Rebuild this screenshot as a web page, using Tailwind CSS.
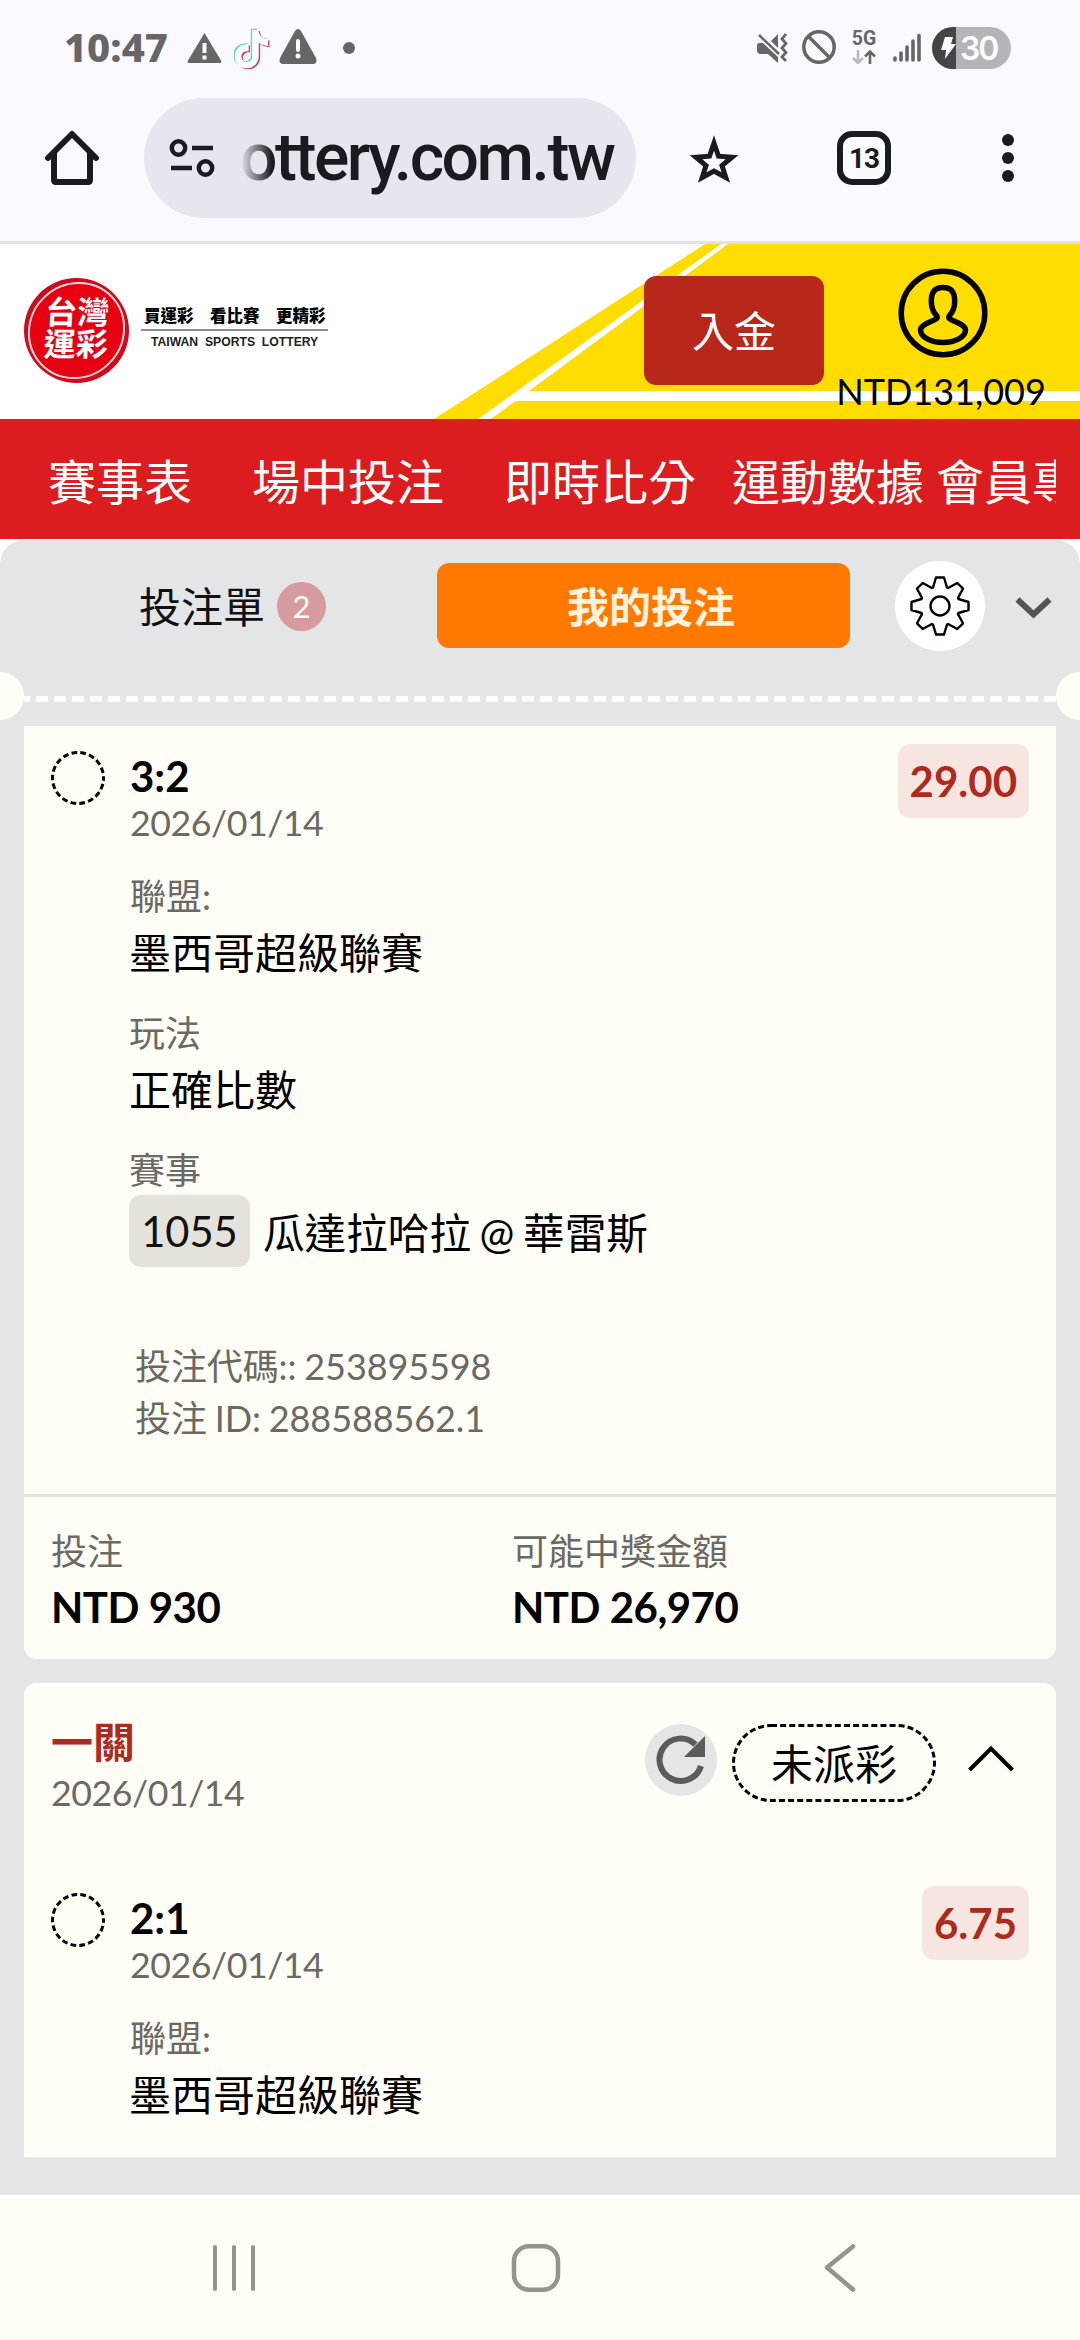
<!DOCTYPE html>
<html lang="zh-Hant">
<head>
<meta charset="utf-8">
<title>台灣運彩</title>
<script src="https://cdn.jsdelivr.net/npm/@tailwindcss/browser@4"></script>
</head>
<body class="w-[1080px] h-[2340px] overflow-hidden flex flex-col bg-[#fffef6] text-black font-['Lato','Noto_Sans_CJK_TC',sans-serif]">

<!-- Status bar -->
<div class="h-[96px] shrink-0 bg-[#faf9ff] flex items-start text-[#666668]">
  <div class="ml-[64px] mt-[20px] w-[105px] leading-[54px] text-[40px] font-extrabold font-['Noto_Sans',sans-serif] whitespace-nowrap">10:47</div>
  <svg class="ml-[18px] mt-[33px]" width="35" height="30" viewBox="0 0 35 30"><path d="M17.500 0 L34 27.500 Q35 30 33 30 H2 Q0 30 1 27.500Z" fill="#666668"/><path d="M15.500 10h4v10h-4z M15.500 22.500h4v4h-4z" fill="#fff"/></svg>
  <svg class="ml-[12px] mt-[28px]" width="36" height="41" viewBox="0 0 36 41">
    <defs><path id="note" d="M12.525.02c1.31-.02 2.61-.01 3.91-.02.08 1.53.63 3.09 1.75 4.17 1.12 1.11 2.7 1.62 4.24 1.79v4.03c-1.440-.05-2.890-.35-4.200-.97-.57-.26-1.100-.59-1.620-.93-.01 2.920.01 5.840-.02 8.750-.08 1.400-.54 2.790-1.350 3.940-1.310 1.920-3.580 3.170-5.910 3.210-1.430.08-2.860-.31-4.080-1.030-2.020-1.190-3.440-3.370-3.650-5.710-.02-.5-.03-1-.01-1.490.18-1.900 1.120-3.720 2.580-4.960 1.660-1.440 3.980-2.130 6.150-1.720.02 1.480-.04 2.960-.04 4.440-.99-.32-2.150-.23-3.020.37-.63.41-1.110 1.040-1.360 1.750-.21.51-.15 1.070-.14 1.610.24 1.640 1.820 3.020 3.500 2.870 1.120-.01 2.190-.66 2.770-1.610.19-.33.4-.67.41-1.060.1-1.790.06-3.570.07-5.360.01-4.030-.01-8.050.02-12.070z"/></defs>
    <use href="#note" fill="#4fe0dc" transform="translate(-3.200 .8) scale(1.6)"/>
    <use href="#note" fill="#d93a5c" transform="translate(-.4 3) scale(1.6)"/>
    <use href="#note" fill="#fff" transform="translate(-1.800 1.900) scale(1.6)"/>
  </svg>
  <svg class="ml-[9px] mt-[29px]" width="38" height="35" viewBox="0 0 38 35"><path d="M16 2 Q19 -2 22 2 L37 29 Q39 35 33 35 H5 Q-1 35 1 29Z" fill="#666668"/><path d="M19 12v9" stroke="#fff" stroke-width="4" stroke-linecap="round"/><circle cx="19" cy="27" r="2.500" fill="#fff"/></svg>
  <div class="ml-[26px] mt-[42px] size-[12px] rounded-full bg-[#666668]"></div>

  <svg class="ml-[402px] mt-[33px]" width="31" height="30" viewBox="0 0 31 30"><path d="M2 10h4l15 14v6L11 21H4Q0 21 0 17V13Q0 10 2 10Z M21 1v14L14 8Z" fill="#666668"/><path d="M2 2 22 21" stroke="#666668" stroke-width="2.500"/><path d="M29 1l-4 5 4 4.500-4 4.500 4 4.500-4 4.500 4 4" fill="none" stroke="#666668" stroke-width="2.800"/></svg>
  <svg class="ml-[14px] mt-[30px]" width="34" height="34" viewBox="0 0 34 34" fill="none" stroke="#666668" stroke-width="3.500"><circle cx="17" cy="17" r="15.200"/><path d="M6 6 28 28"/></svg>
  <div class="ml-[13px] mt-[29px] w-[30px] flex flex-col items-center">
    <div class="text-[19.500px] leading-[20px] font-bold font-['Roboto',sans-serif]">5G</div>
    <svg class="mt-[1px]" width="24" height="14" viewBox="0 0 24 14" fill="none" stroke-width="2.600"><path d="M6 0v12.500M1 8l5 5 5-5" stroke="#b9b9be"/><path d="M18 14V1.500M13 6.500l5-5 5 5" stroke="#666668"/></svg>
  </div>
  <svg class="ml-[14px] mt-[33px]" width="28" height="30" viewBox="0 0 28 30" stroke="#666668" stroke-width="3.600" stroke-linecap="round"><path d="M2 25v2M8 20v7M14 14v13M20 8v19M26 2.500v24.500"/></svg>
  <div class="ml-[11px] mt-[27px] w-[79px] h-[42px] rounded-full overflow-hidden flex bg-[#b4b4b8]">
    <div class="w-[24px] bg-[#454547] flex items-center justify-end"><svg width="16" height="24" viewBox="0 0 16 24"><path d="M5 1h8l-2 7h5L5 23l1-9H1Z" fill="#fff"/></svg></div>
    <div class="ml-[4px] text-[32px] leading-[43px] text-white font-semibold font-['Inter',sans-serif] tracking-[-2px]">30</div>
  </div>
</div>

<!-- Browser toolbar -->
<div class="h-[148px] shrink-0 bg-[#faf9ff] border-b-[3px] border-[#e1e1e8] flex items-start text-[#1a1b20]">
  <svg class="ml-[44px] mt-[34px]" width="56" height="56" viewBox="0 0 56 56" fill="none" stroke="#1a1b20" stroke-width="6" stroke-linejoin="round" stroke-linecap="round"><path d="M4 28 28 4 52 28"/><path d="M10 24V50Q10 52 12 52H44Q46 52 46 50V24"/></svg>
  <div class="ml-[44px] mt-[2px] w-[492px] h-[120px] rounded-full bg-[#e7e6ee] flex">
    <svg class="ml-[25px] mt-[40px]" width="46" height="40" viewBox="0 0 46 40" fill="none" stroke="#1a1b20" stroke-width="4.500"><circle cx="9.500" cy="10" r="6.700"/><path d="M23 10h21M2 30h21"/><circle cx="36.500" cy="30" r="6.700"/></svg>
    <div class="ml-[25px] mt-[18px] w-[380px] leading-[84px] text-[66px] font-medium font-['Roboto',sans-serif] tracking-[-2.5px] whitespace-nowrap bg-linear-to-r from-transparent to-[#1a1b20] to-[32px] bg-clip-text text-transparent">ottery.com.tw</div>
  </div>
  <svg class="ml-[50px] mt-[37px]" width="56" height="53" viewBox="0 0 56 53" fill="none" stroke="#1a1b20" stroke-width="5"><path d="M28 10 32.500 23.200 46 24.200 36 32.500 39.800 44.500 28 38 16.200 44.500 20 32.500 10 24.200 23.500 23.200Z"/></svg>
  <div class="ml-[95px] mt-[35px] w-[54px] h-[54px] border-[6px] border-[#1a1b20] rounded-[15px] flex items-center justify-center text-[28px] leading-none font-bold font-['Roboto',sans-serif] tracking-[-1px]"><span class="pt-[2px]">13</span></div>
  <div class="ml-[111px] mt-[38px] flex flex-col gap-[6px]">
    <div class="size-[12px] rounded-full bg-[#1a1b20]"></div><div class="size-[12px] rounded-full bg-[#1a1b20]"></div><div class="size-[12px] rounded-full bg-[#1a1b20]"></div>
  </div>
</div>

<!-- Site header -->
<header class="relative h-[175px] shrink-0 bg-white flex items-start">
  <svg class="absolute inset-0" width="1080" height="175" viewBox="0 0 1080 175"><path d="M434 175 705 0H1080V175Z" fill="#ffdd00"/><path d="M478 175 721 0h7L491 175Z" fill="#fff"/><path d="M526 147H1080v10H510Z" fill="#fff"/></svg>
  <div class="relative ml-[24px] mt-[34px] size-[105px] rounded-full bg-[#cf0a1c] p-[4px]">
    <div class="size-full rounded-full border-2 border-[#ffd9d9] bg-[#e60012] flex flex-col items-center justify-center pb-[6px] text-white font-bold text-[32px] leading-[32px] -skew-x-3"><span>台灣</span><span>運彩</span></div>
  </div>
  <div class="relative ml-[12px] mt-[62px] w-[187px] flex flex-col">
    <div class="pl-[3px] h-[25px] border-b-2 border-[#8f8f8f] flex gap-[16.500px] text-[16.500px] leading-[20px] font-black whitespace-nowrap"><span>買運彩</span><span>看比賽</span><span>更精彩</span></div>
    <div class="mt-[3px] pl-[10px] text-[12.200px] leading-[16px] font-['Liberation_Sans',sans-serif] font-bold text-[#222] whitespace-pre">TAIWAN  SPORTS  LOTTERY</div>
  </div>
  <div class="relative ml-[316px] mt-[32px] w-[180px] h-[109px] rounded-xl bg-[#b7281b] text-white text-[42px] flex items-center justify-center pt-[1px]">入金</div>
  <div class="relative ml-[11px] mt-[24px] w-[212px] flex flex-col items-center">
    <svg class="ml-[3px]" width="90" height="90" viewBox="0 0 90 90" fill="none" stroke="#000" stroke-width="5.500"><circle cx="45" cy="45" r="41.800"/><path d="M45 19.500C36 19.500 33.300 25 33.300 33 33.300 41 36 45 38.500 47.500 40.500 50.500 37.500 51.500 34 53 28 55.500 22.500 58 22.500 62 22.500 69 33 74.500 45 74.500S67.500 69 67.500 62C67.500 58 62 55.500 56 53 52.500 51.500 49.500 50.500 51.500 47.500 54 45 56.700 41 56.700 33 56.700 25 54 19.500 45 19.500Z"/></svg>
    <div class="mt-[11px] text-[36px] leading-[44px]">NTD131,009</div>
  </div>
</header>

<!-- Site navigation -->
<nav class="h-[120px] shrink-0 bg-[#dc1d1f] px-[24px]">
  <div class="h-full overflow-hidden flex items-center pl-[24px] pt-[5px] text-[48px] leading-[60px] text-white whitespace-nowrap">
    <span class="w-[204px] shrink-0">賽事表</span><span class="w-[252px] shrink-0">場中投注</span><span class="w-[228px] shrink-0">即時比分</span><span class="w-[204px] shrink-0">運動數據</span><span class="shrink-0">會員專區</span>
  </div>
</nav>

<!-- Bet slip panel -->
<main class="h-[1655px] shrink-0 mt-px bg-[#e4e5e7] rounded-t-3xl overflow-hidden flex flex-col">
  <div class="h-[132px] shrink-0 flex items-start">
    <div class="ml-[139px] mt-[35px] w-[125px] leading-[64px] text-[42px] text-[#111] whitespace-nowrap">投注單</div>
    <div class="ml-[13px] mt-[42px] size-[49px] rounded-full bg-[#d79a9e] text-white text-[31px] leading-[49px] text-center">2</div>
    <div class="ml-[111px] mt-[23px] w-[413px] h-[85px] rounded-xl bg-[#ff7900] text-[#fff3e0] text-[42px] leading-[88px] font-bold text-center pl-[15px]">我的投注</div>
    <svg class="ml-[45px] mt-[21px]" width="90" height="90" viewBox="-45 -45 90 90"><circle r="45" fill="#fff"/><path d="M-7-18.500-4-28.500H4L7-18.500 8.100-18 17.300-23 23-17.300 18-8.100 18.500-7 28.500-4V4L18.500 7 18 8.100 23 17.300 17.300 23 8.100 18 7 18.500 4 28.500H-4L-7 18.500-8.100 18-17.300 23-23 17.300-18 8.100-18.500 7-28.500 4V-4L-18.500-7-18-8.100-23-17.300-17.300-23-8.100-18Z" fill="none" stroke="#000" stroke-width="2.400" stroke-linejoin="round"/><circle r="9.500" fill="none" stroke="#000" stroke-width="2.400"/></svg>
    <svg class="ml-[30px] mt-[57px]" width="37" height="22" viewBox="0 0 37 22" fill="none" stroke="#555557" stroke-width="6"><path d="M2.500 2.500 18.500 17.500 34.500 2.500"/></svg>
  </div>

  <!-- Perforation -->
  <div class="h-[48px] shrink-0 flex items-center justify-between">
    <div class="w-[24px] h-[48px] rounded-r-full bg-[#fffef6]"></div>
    <div class="grow h-[6px] mt-[6px] bg-[repeating-linear-gradient(90deg,#fffef6_0_6px,transparent_6px_12px,#fffef6_12px_18px)]"></div>
    <div class="w-[24px] h-[48px] rounded-l-full bg-[#fffef6]"></div>
  </div>

  <div class="px-[24px] mt-[6px] flex flex-col gap-[24px]">
    <!-- First ticket -->
    <section class="bg-[#fffef6] rounded-b-xl h-[933px] flex flex-col">
      <div class="flex items-start pl-[27px] pr-[27px] h-[768px]">
        <svg class="mt-[25px] shrink-0" width="54" height="54" viewBox="0 0 54 54"><circle cx="27" cy="27" r="25.500" fill="none" stroke="#000" stroke-width="3" stroke-dasharray="5.720 3.180" stroke-dashoffset="2.860"/></svg>
        <div class="ml-[25px] pt-[25px] grow flex flex-col">
          <div class="text-[42px] leading-[50px] font-bold">3:2</div>
          <div class="text-[35.700px] leading-[44px] text-[#6b6963] tracking-[-0.45px]">2026/01/14</div>
          <div class="text-[36px] leading-[44px] mt-[29px] text-[#6b6963]">聯盟:</div>
          <div class="text-[42px] leading-[50px] mt-[10px] -ml-px">墨西哥超級聯賽</div>
          <div class="text-[36px] leading-[44px] mt-[33px] -ml-px text-[#6b6963]">玩法</div>
          <div class="text-[42px] leading-[50px] mt-[10px] -ml-px">正確比數</div>
          <div class="text-[36px] leading-[44px] mt-[33px] -ml-px text-[#6b6963]">賽事</div>
          <div class="mt-[3px] flex text-[41.600px] leading-[73px]">
            <span class="-ml-px w-[121px] h-[72px] rounded-xl bg-[#e5e2dc] text-center text-[#111]">1055</span>
            <span class="ml-[13px] pt-[2px] [word-spacing:-2px]">瓜達拉哈拉 @ 華雷斯</span>
          </div>
          <div class="mt-[70px] ml-[5px] text-[36px] leading-[52px] text-[#6b6963] tracking-[-0.1px] [word-spacing:-1.2px]">投注代碼:: 253895598<br>投注 ID: 288588562.1</div>
        </div>
        <div class="mt-[18px] h-[74px] px-[12px] rounded-xl bg-[#f7e6df] text-[#ad2a20] text-[42px] leading-[74px] font-bold">29.00</div>
      </div>
      <div class="grow border-t-[3px] border-[#e5e2dc] pl-[27px] pt-[32px] flex">
        <div class="w-[461px]">
          <div class="text-[36px] leading-[44px] text-[#6b6963]">投注</div>
          <div class="mt-[9px] text-[42px] leading-[50px] font-bold tracking-[-0.5px]">NTD 930</div>
        </div>
        <div>
          <div class="text-[36px] leading-[44px] text-[#6b6963]">可能中獎金額</div>
          <div class="mt-[9px] text-[42px] leading-[50px] font-bold tracking-[-0.5px]">NTD 26,970</div>
        </div>
      </div>
    </section>

    <!-- Second ticket -->
    <section class="bg-[#fffef6] rounded-t-xl h-[474px] flex flex-col px-[27px]">
      <div class="h-[185px] shrink-0 flex items-start">
        <div class="pt-[33px] grow">
          <div class="text-[42px] leading-[52px] font-bold text-[#ad2a20]">一關</div>
          <div class="text-[35.700px] leading-[44px] mt-[3px] text-[#6b6963] tracking-[-0.45px]">2026/01/14</div>
        </div>
        <svg class="mt-[41px]" width="72" height="72" viewBox="0 0 72 72"><circle cx="36" cy="36" r="36" fill="#e4e5e7"/><path d="M50.500 20.500A21.200 21.200 0 1 0 56 42" fill="none" stroke="#5b5b5b" stroke-width="6"/><path d="M60 12V33H39Z" fill="#5b5b5b"/></svg>
        <div class="relative ml-[15px] mt-[41px] w-[204px] h-[78px] text-center text-[42px] leading-[80px]">
          <svg class="absolute inset-0" width="204" height="78" viewBox="0 0 204 78"><rect x="1.500" y="1.500" width="201" height="75" rx="37.500" fill="none" stroke="#000" stroke-width="3" stroke-dasharray="6 3.120"/></svg>
          未派彩
        </div>
        <svg class="ml-[31px] mr-[14px] mt-[62px]" width="48" height="28" viewBox="0 0 48 28" fill="none" stroke="#000" stroke-width="4"><path d="M2.500 25 24 3.500 45.500 25"/></svg>
      </div>
      <div class="flex items-start">
        <svg class="mt-[25px] shrink-0" width="54" height="54" viewBox="0 0 54 54"><circle cx="27" cy="27" r="25.500" fill="none" stroke="#000" stroke-width="3" stroke-dasharray="5.720 3.180" stroke-dashoffset="2.860"/></svg>
        <div class="ml-[25px] pt-[25px] grow flex flex-col">
          <div class="text-[42px] leading-[50px] font-bold">2:1</div>
          <div class="text-[35.700px] leading-[44px] text-[#6b6963] tracking-[-0.45px]">2026/01/14</div>
          <div class="text-[36px] leading-[44px] mt-[29px] text-[#6b6963]">聯盟:</div>
          <div class="text-[42px] leading-[50px] mt-[10px] -ml-px">墨西哥超級聯賽</div>
        </div>
        <div class="mt-[18px] h-[74px] px-[12px] rounded-xl bg-[#f7e6df] text-[#ad2a20] text-[42px] leading-[74px] font-bold">6.75</div>
      </div>
    </section>
  </div>
</main>

<!-- System navigation -->
<div class="grow bg-[#fffef6] flex items-start pt-[49px]">
  <svg class="ml-[212px]" width="44" height="48" viewBox="0 0 44 48" stroke="#94938d" stroke-width="4" stroke-linecap="round"><path d="M3 3v42M22 3v42M41 3v42"/></svg>
  <svg class="ml-[255px]" width="50" height="48" viewBox="0 0 50 48" fill="none" stroke="#94938d" stroke-width="4.500"><rect x="3" y="2.300" width="44" height="43.400" rx="15"/></svg>
  <svg class="ml-[262px]" width="34" height="48" viewBox="0 0 34 48" fill="none" stroke="#94938d" stroke-width="4.500" stroke-linecap="round" stroke-linejoin="round"><path d="M30 2.500 4 23.500 30 45.500"/></svg>
</div>
</body>
</html>
